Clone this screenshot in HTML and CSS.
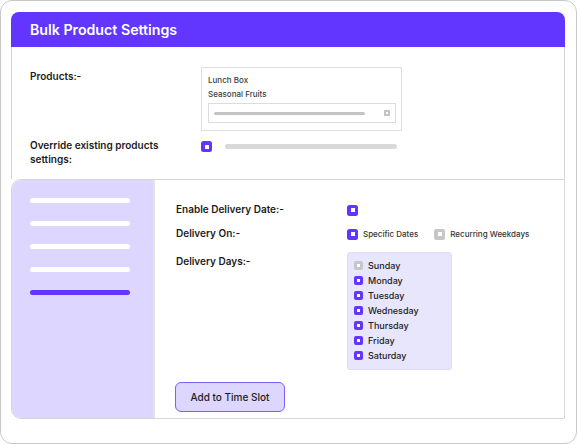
FILE: index.html
```html
<!DOCTYPE html>
<html lang="en" dir="ltr">
  <head>
    <meta charset="utf-8">
    <title>Bulk Product Settings</title>
    <link rel="stylesheet" href="styles.css">
  </head>
  <body>

    <div class="frame">
      <div class="card">
        <div class="card_head">Bulk Product Settings</div>

        <div class="card_top">
          <div class="row">
            <div class="label products_label">Products:-</div>
            <div class="product_box">
              <p class="product">Lunch Box</p>
              <p class="product">Seasonal Fruits</p>
              <div class="product_input">
                <span class="input_bar"></span>
                <span class="input_icon"></span>
              </div>
            </div>
          </div>
          <div class="row override">
            <div class="label">Override existing products<br>settings:</div>
            <div class="override_value">
              <span class="check"></span>
              <span class="grey_bar"></span>
            </div>
          </div>
        </div>

        <div class="card_bottom">
          <div class="sidebar">
            <span class="side_bar"></span>
            <span class="side_bar"></span>
            <span class="side_bar"></span>
            <span class="side_bar"></span>
            <span class="side_bar active"></span>
          </div>

          <div class="panel">
            <div class="prow">
              <div class="label">Enable Delivery Date:-</div>
              <div class="pvalue"><span class="check"></span></div>
            </div>
            <div class="prow">
              <div class="label">Delivery On:-</div>
              <div class="pvalue">
                <span class="check"></span><span class="opt">Specific Dates</span>
                <span class="check off"></span><span class="opt">Recurring Weekdays</span>
              </div>
            </div>
            <div class="prow days_row">
              <div class="label days_label">Delivery Days:-</div>
              <div class="days">
                <div class="day"><span class="check small off"></span>Sunday</div>
                <div class="day"><span class="check small"></span>Monday</div>
                <div class="day"><span class="check small"></span>Tuesday</div>
                <div class="day"><span class="check small"></span>Wednesday</div>
                <div class="day"><span class="check small"></span>Thursday</div>
                <div class="day"><span class="check small"></span>Friday</div>
                <div class="day"><span class="check small"></span>Saturday</div>
              </div>
            </div>
            <button class="slot_button">Add to Time Slot</button>
          </div>
        </div>
      </div>
    </div>

  </body>
</html>
```

FILE: styles.css
```css
* {
  box-sizing: border-box;
}

body {
  margin: 0;
  font-family: "Inter", "Liberation Sans", sans-serif;
  color: #1c1c1c;
}

.frame {
  width: 577px;
  height: 444px;
  border: 1px solid #c9c9c9;
  border-radius: 12px;
  background: #ffffff;
  padding: 11px 11px 0 10px;
}

.card_head {
  height: 35px;
  background-color: #6236fe;
  border-radius: 8px 8px 0 0;
  color: #ffffff;
  font-size: 14.2px;
  font-weight: 600;
  line-height: 35px;
  padding-left: 19px;
}

.card_top {
  border-left: 1px solid #d4d4d4;
  border-right: 1px solid #d4d4d4;
  padding: 20px 18px 13px 18px;
}

.row {
  display: grid;
  grid-template-columns: 171px auto;
  align-items: start;
}

.override {
  margin-top: 8px;
}

.label {
  font-size: 10px;
  font-weight: 600;
  line-height: 13.5px;
  color: #1c1c1c;
}

.products_label {
  padding-top: 3px;
}

.product_box {
  width: 201px;
  height: 64px;
  border: 1px solid #dddddd;
  padding: 5px 5px 0 6px;
}

.product {
  margin: 0;
  font-size: 8px;
  font-weight: 500;
  line-height: 14px;
  color: #3c3c3c;
}

.product_input {
  margin-top: 2px;
  height: 20px;
  border: 1px solid #dcdcdc;
  display: flex;
  align-items: center;
  justify-content: space-between;
  padding: 0 5px;
}

.input_bar {
  width: 151px;
  height: 3px;
  border-radius: 2px;
  background: #c4c4c4;
}

.input_icon {
  width: 6px;
  height: 6px;
  border: 2px solid #c4c4c4;
}

.override_value {
  display: flex;
  align-items: center;
  margin-top: 2px;
  height: 11px;
}

.grey_bar {
  margin-left: 13px;
  width: 172px;
  height: 5px;
  border-radius: 3px;
  background: #d9d9d9;
}

.check {
  flex: none;
  width: 11px;
  height: 11px;
  border-radius: 2.5px;
  background: #6236fe;
  display: flex;
  align-items: center;
  justify-content: center;
}

.check:after {
  content: '';
  width: 4px;
  height: 4px;
  background: #ffffff;
}

.check.off {
  background: #c6c6c6;
}

.check.small {
  width: 9px;
  height: 9px;
  border-radius: 2px;
}

.check.small:after {
  width: 3.5px;
  height: 3.5px;
}

.card_bottom {
  display: flex;
  border: 1px solid #d6d6d6;
  border-radius: 10px 0 0 10px;
  overflow: hidden;
}

.sidebar {
  width: 143px;
  flex: none;
  background: #ddd6fe;
  border-right: 2px solid #e2e2e2;
  padding: 18px 0 0 18px;
  display: flex;
  flex-direction: column;
  gap: 18px;
}

.side_bar {
  width: 100px;
  height: 5px;
  border-radius: 3px;
  background: #ffffff;
}

.side_bar.active {
  background: #6236fe;
}

.panel {
  flex: 1;
  padding: 23px 0 6px 21px;
}

.prow {
  display: grid;
  grid-template-columns: 171px auto;
  align-items: center;
  min-height: 14px;
  margin-bottom: 10px;
}

.pvalue {
  display: flex;
  align-items: center;
}

.opt {
  font-size: 8px;
  font-weight: 500;
  color: #333333;
  margin-left: 5px;
  margin-right: 16px;
}

.days_row {
  align-items: start;
  margin-top: 11px;
  margin-bottom: 0;
}

.days_label {
  padding-top: 3px;
}

.days {
  width: 105px;
  height: 118px;
  background: #e7e6fc;
  border: 1px solid #dedcf3;
  border-radius: 3px;
  padding: 5px 6px 0 6px;
}

.day {
  display: flex;
  align-items: center;
  gap: 5px;
  height: 15px;
  font-size: 9px;
  font-weight: 500;
  color: #222222;
}

.slot_button {
  display: block;
  margin: 12px 0 0 -1px;
  width: 110px;
  height: 30px;
  border: 1px solid #7d5efb;
  border-radius: 6px;
  background: #ddd6fe;
  font-family: "Inter", "Liberation Sans", sans-serif;
  font-size: 10px;
  font-weight: 500;
  color: #1c1c1c;
  padding: 0;
}
```
